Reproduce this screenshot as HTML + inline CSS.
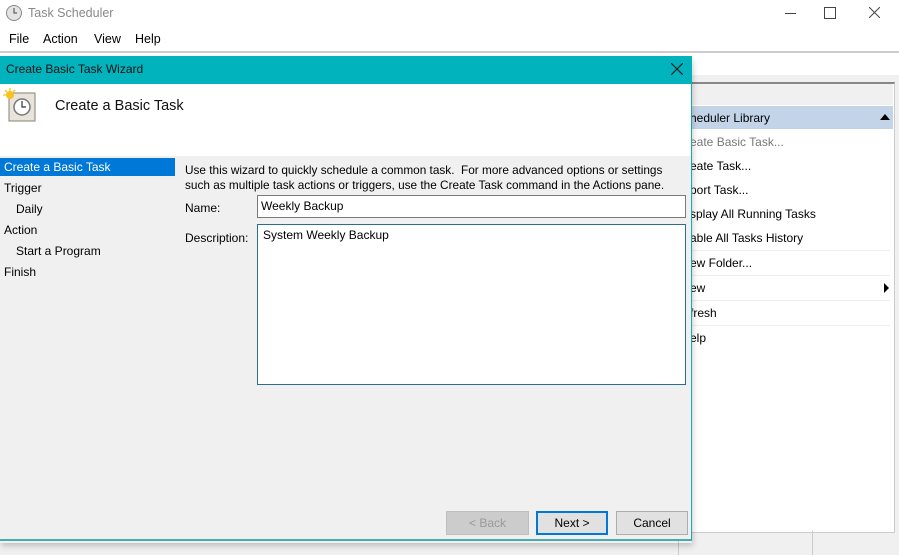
<!DOCTYPE html><html><head><style>
body{margin:0;width:899px;height:555px;overflow:hidden;background:#fff;font-family:"Liberation Sans",sans-serif;font-size:12px;color:#000;position:relative}
.a{position:absolute}
.t{white-space:nowrap}
</style></head><body>
<!-- main window -->
<svg class="a" style="left:5px;top:4px" width="18" height="18" viewBox="0 0 18 18"><circle cx="9" cy="9" r="7.5" fill="#e4e4e4" stroke="#888"/><path d="M9 4v5h3" stroke="#444" fill="none"/></svg>
<div class="a t" style="left:28px;top:6px;color:#888;font-size:12.5px">Task Scheduler</div>
<div class="a" style="left:785px;top:13px;width:11px;height:1px;background:#444"></div>
<div class="a" style="left:824px;top:7px;width:10px;height:10px;border:1px solid #444"></div>
<svg class="a" style="left:869px;top:7px" width="11" height="11"><path d="M0 0L11 11M11 0L0 11" stroke="#444" stroke-width="1"/></svg>
<div class="a t" style="left:9px;top:32px;font-size:12.5px">File</div>
<div class="a t" style="left:43px;top:32px;font-size:12.5px">Action</div>
<div class="a t" style="left:94px;top:32px;font-size:12.5px">View</div>
<div class="a t" style="left:135px;top:32px;font-size:12.5px">Help</div>
<div class="a" style="left:0;top:51px;width:899px;height:2px;background:#ccc"></div>
<div class="a" style="left:0;top:53px;width:899px;height:502px;background:#f0f0f0"></div>
<div class="a" style="left:0;top:53px;width:899px;height:22px;background:#fff"></div>
<div class="a" style="left:678px;top:82px;width:215px;height:448px;background:#fff;border:1px solid #ccc;border-top:2px solid #888"></div>
<div class="a" style="left:679px;top:84px;width:214px;height:21px;background:#f0f0f0"></div>
<div class="a" style="left:679px;top:106px;width:214px;height:23px;background:#c4d4e8"></div>
<div class="a t" style="left:690px;top:111px;font-size:12px">heduler Library</div>
<div class="a" style="left:880px;top:114px;width:0;height:0;border-left:5px solid transparent;border-right:5px solid transparent;border-bottom:6px solid #000"></div>
<div class="a t" style="left:690px;top:135px;color:#777">eate Basic Task...</div>
<div class="a t" style="left:690px;top:159px">eate Task...</div>
<div class="a t" style="left:690px;top:183px">port Task...</div>
<div class="a t" style="left:690px;top:207px">splay All Running Tasks</div>
<div class="a t" style="left:690px;top:231px">able All Tasks History</div>
<div class="a" style="left:690px;top:250px;width:200px;height:1px;background:#eee"></div>
<div class="a t" style="left:690px;top:256px">ew Folder...</div>
<div class="a" style="left:690px;top:275px;width:200px;height:1px;background:#eee"></div>
<div class="a t" style="left:690px;top:281px">ew</div>
<div class="a" style="left:884px;top:283px;width:0;height:0;border-top:5px solid transparent;border-bottom:5px solid transparent;border-left:5px solid #000"></div>
<div class="a" style="left:690px;top:300px;width:200px;height:1px;background:#eee"></div>
<div class="a t" style="left:690px;top:306px">fresh</div>
<div class="a" style="left:690px;top:325px;width:200px;height:1px;background:#eee"></div>
<div class="a t" style="left:690px;top:331px">elp</div>
<div class="a" style="left:678px;top:530px;width:1px;height:25px;background:#ccc"></div>
<div class="a" style="left:812px;top:530px;width:1px;height:25px;background:#ccc"></div>
<!-- dialog shadow -->
<div class="a" style="left:0;top:58px;width:692px;height:485px;box-shadow:1px 3px 6px rgba(0,0,0,.2)"></div>
<!-- dialog -->
<div class="a" style="left:0;top:56px;width:692px;height:485px;background:#f0f0f0;border-right:1px solid #1aa7b0;border-bottom:2px solid #4aa9a9;box-sizing:border-box"></div>
<div class="a" style="left:0;top:56px;width:692px;height:28px;background:#00b3bd"></div>
<div class="a t" style="left:6px;top:62px;font-size:12px;color:#111">Create Basic Task Wizard</div>
<svg class="a" style="left:671px;top:63px" width="12" height="12"><path d="M0 0L12 12M12 0L0 12" stroke="#222" stroke-width="1.2"/></svg>
<div class="a" style="left:0;top:84px;width:691px;height:72px;background:#fff"></div>
<svg class="a" style="left:3px;top:88px" width="34" height="36" viewBox="0 0 34 36">
<rect x="6" y="5" width="26" height="28" fill="#e8e4dc" stroke="#8a7f70"/>
<circle cx="19" cy="19" r="8" fill="#fff" stroke="#777" stroke-width="1.5"/>
<path d="M19 13v6h4" stroke="#333" fill="none" stroke-width="1.2"/>
<circle cx="7" cy="7" r="4" fill="#f7c21c"/>
<path d="M7 0v3M0 7h3M2 2l2 2M12 2l-2 2" stroke="#f7c21c" stroke-width="1.3"/>
</svg>
<div class="a t" style="left:55px;top:98px;font-size:14.5px;color:#111">Create a Basic Task</div>
<div class="a" style="left:0;top:158px;width:175px;height:18px;background:#0078d7"></div>
<div class="a t" style="left:4px;top:160px;color:#fff">Create a Basic Task</div>
<div class="a t" style="left:4px;top:181px">Trigger</div>
<div class="a t" style="left:16px;top:202px">Daily</div>
<div class="a t" style="left:4px;top:223px">Action</div>
<div class="a t" style="left:16px;top:244px">Start a Program</div>
<div class="a t" style="left:4px;top:265px">Finish</div>
<div class="a t" style="left:185px;top:163px;line-height:15px;font-size:11.8px">Use this wizard to quickly schedule a common task.&nbsp; For more advanced options or settings<br>such as multiple task actions or triggers, use the Create Task command in the Actions pane.</div>
<div class="a t" style="left:185px;top:201px">Name:</div>
<div class="a" style="left:257px;top:195px;width:429px;height:23px;background:#fff;border:1px solid #7a7a7a;box-sizing:border-box"></div>
<div class="a t" style="left:261px;top:199px">Weekly Backup</div>
<div class="a t" style="left:185px;top:231px">Description:</div>
<div class="a" style="left:257px;top:224px;width:429px;height:161px;background:#fff;border:1px solid #2b6e8a;box-sizing:border-box"></div>
<div class="a t" style="left:263px;top:228px">System Weekly Backup</div>
<div class="a" style="left:446px;top:511px;width:83px;height:24px;background:#ccc;border:1px solid #bfbfbf;box-sizing:border-box;color:#999;text-align:center;line-height:22px">&lt; Back</div>
<div class="a" style="left:536px;top:511px;width:72px;height:24px;background:#e1e1e1;border:2px solid #0078d7;box-sizing:border-box;text-align:center;line-height:20px">Next &gt;</div>
<div class="a" style="left:616px;top:511px;width:72px;height:24px;background:#e1e1e1;border:1px solid #adadad;box-sizing:border-box;text-align:center;line-height:22px">Cancel</div>
</body></html>
